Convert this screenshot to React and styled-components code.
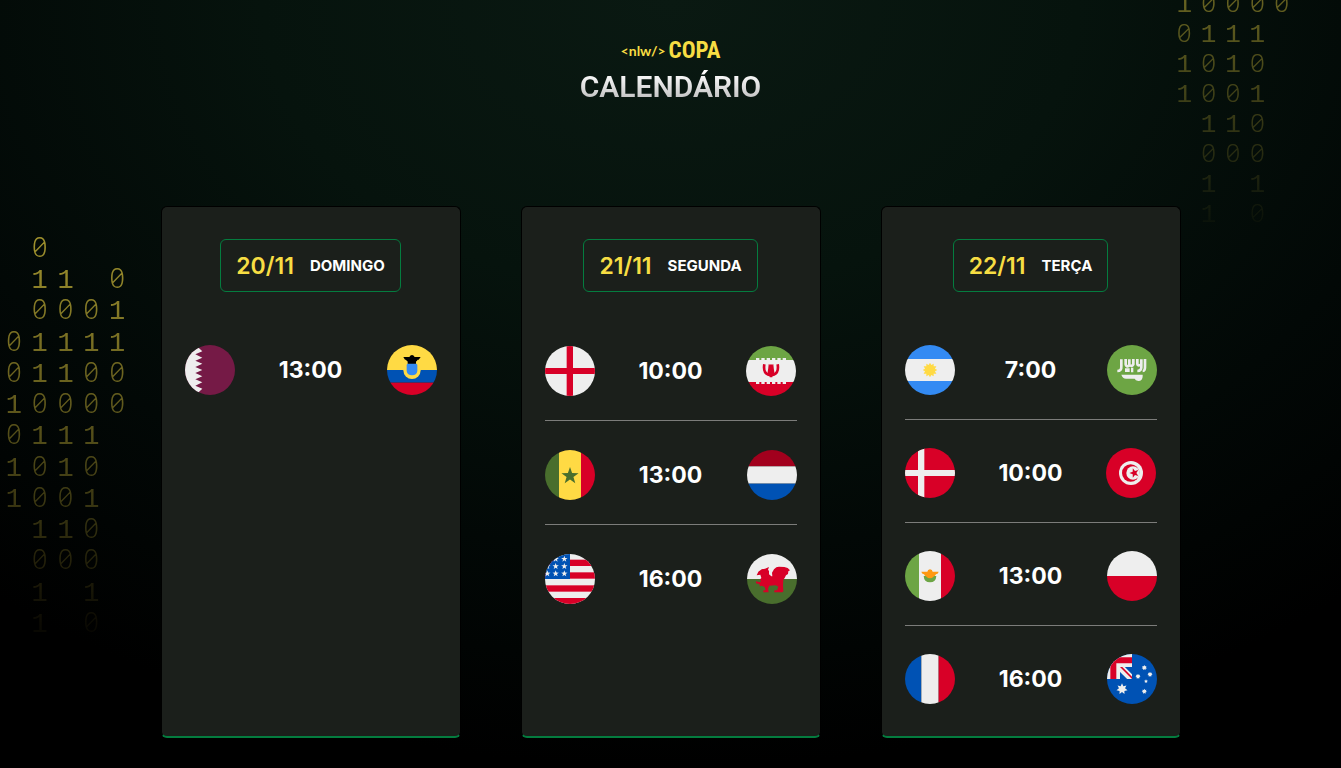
import React from "react";
import styled, { createGlobalStyle } from "styled-components";

const GlobalStyle = createGlobalStyle`
  * { box-sizing: border-box; margin: 0; padding: 0; }
  body { background: #000; color: #fff; font-family: Inter, "Noto Sans", sans-serif; }
`;

const Page = styled.div`
  position: relative;
  min-height: 100vh;
  overflow: hidden;
  padding: 41px 24px 30px;
  background: radial-gradient(ellipse 80% 100% at 50% 0, #0a1912 0%, #06130d 38%, #020806 72%, #000 100%);
`;

const Header = styled.header`
  display: flex;
  flex-direction: column;
  align-items: center;
`;

const Logo = styled.div`
  display: flex;
  align-items: center;
  gap: 3px;
  height: 20px;
  color: #f7dd43;
`;

const LogoTag = styled.span`
  font: 700 14px/20px Lato, sans-serif;
`;

const LogoName = styled.span`
  font: 700 23px/20px "Liberation Sans Narrow", "Roboto Condensed", Roboto, sans-serif;
`;

const Title = styled.h1`
  margin-top: 8px;
  font: 600 30px/36px Roboto, sans-serif;
  color: transparent;
  background: linear-gradient(180deg, #fff 10%, #b4b4b4 100%);
  background-clip: text;
  -webkit-background-clip: text;
`;

const Cards = styled.main`
  position: relative;
  display: flex;
  flex-wrap: wrap;
  justify-content: center;
  gap: 60px;
  margin-top: 101px;
`;

const CardBox = styled.section`
  width: 300px;
  display: flex;
  flex-direction: column;
  align-items: center;
  padding: 32px 23px;
  background: #1b1f1b;
  border: 1px solid #000;
  border-bottom: 2px solid #047c3f;
  border-radius: 6px;
`;

const DateBadge = styled.h2`
  display: flex;
  align-items: center;
  gap: 16px;
  height: 53px;
  padding: 0 15px;
  border: 1px solid #047c3f;
  border-radius: 6px;
`;

const Day = styled.span`
  font-size: 23px;
  line-height: 32px;
  font-weight: 600;
  color: #f7dd43;
`;

const Weekday = styled.span`
  font-size: 15px;
  line-height: 24px;
  font-weight: 700;
`;

const Games = styled.ul`
  width: 100%;
  margin-top: 25px;
  list-style: none;
`;

const Game = styled.li`
  display: flex;
  align-items: center;
  justify-content: space-between;
  padding: ${(p) => p.$gap}px 0 24px;
  border-bottom: 1px solid #7c7c7a;
  &:last-child { padding-bottom: 0; border-bottom: 0; }
`;

const Time = styled.strong`
  font-size: 23px;
  line-height: 32px;
  font-weight: 700;
`;

const FlagSvg = styled.svg`
  display: block;
  width: 50px;
  height: 50px;
  border-radius: 50%;
`;

const Digits = styled.div`
  position: absolute;
  display: grid;
  grid-template-columns: repeat(5, 1fr);
  grid-auto-rows: minmax(0, 1fr);
  justify-items: center;
  align-items: baseline;
  color: #f7dd43;
  font: 300 27px/24px "Noto Sans", sans-serif;
  font-feature-settings: "zero";
`;

const LeftDigits = styled(Digits)`
  top: 235px;
  left: 1px;
  width: 129px;
  height: 406px;
  mask-image: linear-gradient(180deg, rgba(0, 0, 0, 0.65), rgba(0, 0, 0, 0.02));
`;

const RightDigits = styled(Digits)`
  top: -10px;
  right: 47px;
  width: 122px;
  height: 240px;
  font-size: 26px;
  mask-image: linear-gradient(180deg, rgba(0, 0, 0, 0.42), rgba(0, 0, 0, 0.02));
`;

const One = styled.span`
  font-family: "Liberation Mono", monospace;
`;

const PATTERN = [
  " 0   ",
  " 11 0",
  " 0001",
  "01111",
  "01100",
  "10000",
  "0111 ",
  "1010 ",
  "1001 ",
  " 110 ",
  " 000 ",
  " 1 1 ",
  " 1 0 ",
];

const RED = "#d80027";
const WHITE = "#eeeeee";
const BLUE = "#0052b4";
const YELLOW = "#ffda44";
const GREEN = "#6da544";
const OLIVE = "#496e2d";
const SKY = "#338af3";

function Star({ x, y, r, inner = 0.4, n = 5, turn = -90, fill = WHITE }) {
  const points = Array.from({ length: n * 2 }, (_, i) => {
    const a = ((turn + (i * 180) / n) * Math.PI) / 180;
    const d = i % 2 ? r * inner : r;
    return `${(x + d * Math.cos(a)).toFixed(1)},${(y + d * Math.sin(a)).toFixed(1)}`;
  }).join(" ");
  return <polygon points={points} fill={fill} />;
}

const Rows = ({ stripes }) =>
  stripes.map(([fill, y, h]) => <rect key={y} y={y} width="150" height={h} fill={fill} />);

const Columns = ({ stripes }) =>
  stripes.map(([fill, x, w]) => <rect key={x} x={x} width={w} height="150" fill={fill} />);

const flags = {
  Catar: (
    <>
      <rect width="150" height="150" fill="#751a46" />
      <path
        fill={WHITE}
        d="M0 0H32L52 19 31 28 52 38 31 47 52 56 31 66 52 75 31 84 52 94 31 103 52 112 31 122 52 131 32 150H0Z"
      />
    </>
  ),
  Equador: (
    <>
      <Rows stripes={[[YELLOW, 0, 75], [BLUE, 75, 38], [RED, 113, 37]]} />
      <path fill={YELLOW} d="M49 62H101V76A26 26 0 0 1 49 76Z" />
      <path fill={SKY} d="M59 60Q59 54 75 54T91 60V78Q89 91 75 91T59 78Z" />
      <path fill="#000" d="M49 36H67Q70 30 75 30T83 36H101L95 44H92L89 49H87V56H62V49H60L57 44H54Z" />
    </>
  ),
  Inglaterra: (
    <>
      <rect width="150" height="150" fill={WHITE} />
      <path fill={RED} d="M65 0H84V66H150V84H84V150H65V84H0V66H65Z" />
    </>
  ),
  "Irã": (
    <>
      <Rows stripes={[[GREEN, 0, 42], [WHITE, 42, 66], [RED, 108, 42]]} />
      {[30, 46, 62, 78, 94, 110].map((x) => (
        <path key={x} fill={WHITE} d={`M${x} 36h10v8h-10zM${x} 106h10v8h-10z`} />
      ))}
      <path
        fill="none"
        stroke={RED}
        strokeWidth="8"
        d="M55 55Q51 79 66 86Q70 88 75 88Q80 88 84 86Q99 79 95 55"
      />
      <path fill={RED} d="M68 55H71V84H64Q67 68 68 55ZM71 58L75 54 79 58V94H71ZM79 55H82Q83 68 86 84H79Z" />
    </>
  ),
  Senegal: (
    <>
      <Columns stripes={[[OLIVE, 0, 42], [YELLOW, 42, 66], [RED, 108, 42]]} />
      <Star x={75} y={78} r={27} fill={OLIVE} />
    </>
  ),
  Holanda: <Rows stripes={[["#a2001d", 0, 49], [WHITE, 49, 52], [BLUE, 101, 49]]} />,
  "Estados Unidos": (
    <>
      <rect width="150" height="150" fill={WHITE} />
      {[17, 55, 94, 132].map((y) => (
        <rect key={y} y={y} width="150" height="19" fill={RED} />
      ))}
      <rect width="75" height="75" fill={BLUE} />
      {[15, 37, 59].map((y) => [7, 32, 58].map((x) => <Star key={`${x}-${y}`} x={x} y={y} r={10} />))}
    </>
  ),
  "País de Gales": (
    <>
      <Rows stripes={[[WHITE, 0, 75], [OLIVE, 75, 75]]} />
      <path
        fill={RED}
        d="M29 64L34 53 44 46 54 44 66 39 63 47 66 51 66 61 73 67H76L75 56 81 46 88 40 96 38 112 39 122 42 129 49 124 52 123 60 117 64 113 72 109 77 108 94 109 112 106 115H82V109H90L94 98 86 94 67 95 63 104 65 115H49V109H56L53 99 45 95 38 97V91L27 88V82L36 84 42 83 39 76 43 72 40 62Z"
      />
    </>
  ),
  Argentina: (
    <>
      <Rows stripes={[[SKY, 0, 42], [WHITE, 42, 66], [SKY, 108, 42]]} />
      <Star x={75} y={75} r={22} inner={0.7} n={12} fill={YELLOW} />
    </>
  ),
  "Arábia Saudita": (
    <>
      <rect width="150" height="150" fill={GREEN} />
      <path fill="none" stroke={WHITE} strokeWidth="8" d="M31 78Q44 78 43 64V43M56 42V58Q57 64 62 64Q67 64 67 58V43M67 60Q75 66 79 58V42M91 42V57Q92 63 100 60M91 78Q105 78 103 62V43M114 42V62Q115 78 107 78" />
      <path fill={WHITE} d="M54 70H68V81H54ZM72 68H79V82H72ZM43 89H107V94Q107 108 94 108Q85 107 83 101H57Q47 101 43 89Z" />
    </>
  ),
  Dinamarca: (
    <>
      <rect width="150" height="150" fill={RED} />
      <path fill={WHITE} d="M39 0H58V66H150V84H58V150H39V84H0V66H39Z" />
    </>
  ),
  "Tunísia": (
    <>
      <rect width="150" height="150" fill={RED} />
      <circle cx="75" cy="75" r="36" fill={WHITE} />
      <circle cx="74" cy="75" r="26" fill={RED} />
      <circle cx="81" cy="75" r="20" fill={WHITE} />
      <Star x={85} y={75} r={15} turn={180} fill={RED} />
    </>
  ),
  "México": (
    <>
      <Columns stripes={[[GREEN, 0, 42], [WHITE, 42, 66], [RED, 108, 42]]} />
      <path fill={GREEN} d="M56 75H94Q93 94 75 94T56 75Z" />
      <path fill="#ff9811" d="M49 62H67Q68 56 75 55Q82 56 83 62H101Q100 69 93 70Q91 76 85 77Q82 82 75 82T65 77Q59 76 57 70Q50 69 49 62Z" />
    </>
  ),
  "Polônia": <Rows stripes={[[WHITE, 0, 75], [RED, 75, 75]]} />,
  "França": <Columns stripes={[[BLUE, 0, 49], [WHITE, 49, 52], [RED, 101, 49]]} />,
  "Austrália": (
    <>
      <rect width="150" height="150" fill={BLUE} />
      <rect width="75" height="75" fill={WHITE} />
      <path fill={RED} d="M10 10H75V28H28V75H10Z" />
      <path fill={BLUE} d="M53 39H75V62ZM39 53V75H61Z" />
      <path fill={WHITE} d="M30 30H75V39H53L75 61V75H61L39 53V75H30Z" />
      <path fill={RED} d="M39 39H46L75 68V75Z" />
      <Star x={45} y={105} r={17} inner={0.55} n={7} />
      <Star x={112} y={41} r={8} inner={0.6} n={7} />
      <Star x={93} y={67} r={8} inner={0.6} n={7} />
      <Star x={129} y={61} r={8} inner={0.6} n={7} />
      <Star x={117} y={82} r={6} inner={0.5} />
      <Star x={112} y={112} r={8} inner={0.6} n={7} />
    </>
  ),
};

const schedule = [
  { date: "20/11", weekday: "DOMINGO", gap: 28, games: [["Catar", "13:00", "Equador"]] },
  {
    date: "21/11",
    weekday: "SEGUNDA",
    gap: 29,
    games: [
      ["Inglaterra", "10:00", "Irã"],
      ["Senegal", "13:00", "Holanda"],
      ["Estados Unidos", "16:00", "País de Gales"],
    ],
  },
  {
    date: "22/11",
    weekday: "TERÇA",
    gap: 28,
    games: [
      ["Argentina", "7:00", "Arábia Saudita"],
      ["Dinamarca", "10:00", "Tunísia"],
      ["México", "13:00", "Polônia"],
      ["França", "16:00", "Austrália"],
    ],
  },
];

const Flag = ({ country }) => (
  <FlagSvg viewBox="0 0 150 150" role="img" aria-label={country}>
    {flags[country]}
  </FlagSvg>
);

// Blank cells hold a no-break space so that every row keeps the same baseline.
const toCells = (rows) =>
  rows
    .join("")
    .split("")
    .map((d, i) =>
      d === "1" ? <One key={i}>1</One> : <span key={i}>{d === " " ? "\u00a0" : d}</span>
    );

function Card({ date, weekday, gap, games }) {
  return (
    <CardBox>
      <DateBadge>
        <Day>{date}</Day>
        <Weekday>{weekday}</Weekday>
      </DateBadge>
      <Games>
        {games.map(([home, time, away]) => (
          <Game key={home} $gap={gap}>
            <Flag country={home} />
            <Time>{time}</Time>
            <Flag country={away} />
          </Game>
        ))}
      </Games>
    </CardBox>
  );
}

export default function App() {
  return (
    <>
      <GlobalStyle />
      <Page>
        <LeftDigits aria-hidden="true">{toCells(PATTERN)}</LeftDigits>
        <RightDigits aria-hidden="true">{toCells(PATTERN.slice(5))}</RightDigits>
        <Header>
          <Logo>
            <LogoTag>&lt;nlw/&gt;</LogoTag>
            <LogoName>COPA</LogoName>
          </Logo>
          <Title>CALENDÁRIO</Title>
        </Header>
        <Cards>
          {schedule.map((day) => (
            <Card key={day.date} {...day} />
          ))}
        </Cards>
      </Page>
    </>
  );
}
